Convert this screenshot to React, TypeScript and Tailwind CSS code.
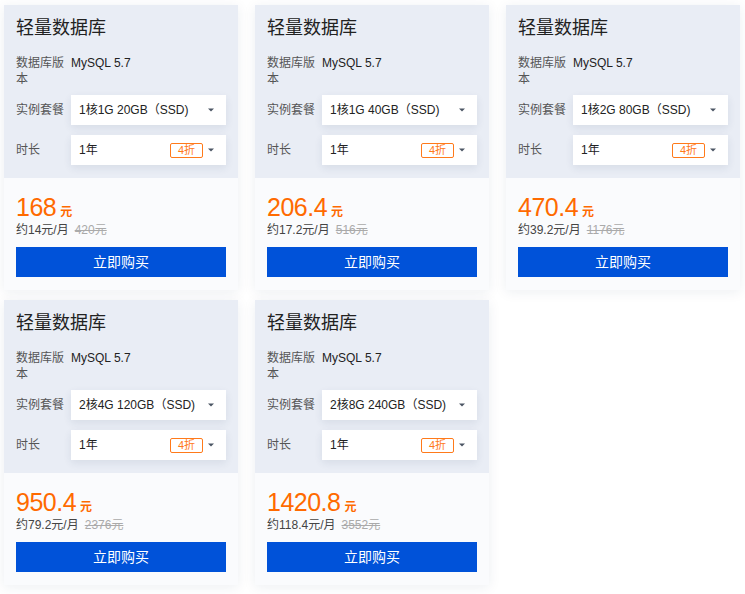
import React from 'react';

type Plan = { spec: string; price: string; monthly: string; original: string };

const plans: Plan[] = [
  { spec: '1核1G 20GB（SSD)', price: '168', monthly: '约14元/月', original: '420元' },
  { spec: '1核1G 40GB（SSD)', price: '206.4', monthly: '约17.2元/月', original: '516元' },
  { spec: '1核2G 80GB（SSD)', price: '470.4', monthly: '约39.2元/月', original: '1176元' },
  { spec: '2核4G 120GB（SSD)', price: '950.4', monthly: '约79.2元/月', original: '2376元' },
  { spec: '2核8G 240GB（SSD)', price: '1420.8', monthly: '约118.4元/月', original: '3552元' },
];

function Caret() {
  return (
    <svg width="6" height="4" viewBox="0 0 6 4" className="shrink-0">
      <path d="M0 0.5h6L3 3.5z" fill="#4b5563" />
    </svg>
  );
}

function Card({ plan }: { plan: Plan }) {
  return (
    <div className="w-[234px] h-[285px] flex flex-col bg-[#fafbfd] shadow-[0_2px_12px_rgba(30,50,90,0.08)]">
      <div className="h-[173px] bg-[#e9edf5] px-3 pt-[10px]">
        <h3 className="text-[18px] leading-[26px] text-[#222]">轻量数据库</h3>
        <div className="mt-[14px] flex text-[12px] leading-[16px]">
          <span className="w-[52px] text-[#555]">数据库版本</span>
          <span className="ml-[3px] text-[#222]">MySQL 5.7</span>
        </div>
        <div className="mt-[8px] flex items-center">
          <span className="w-[55px] text-[12px] text-[#555]">实例套餐</span>
          <div className="w-[155px] h-[30px] bg-white flex items-center justify-between pl-2 pr-[12px] shadow-[0_3px_8px_rgba(30,50,90,0.09)]">
            <span className="text-[12px] text-[#222]">{plan.spec}</span>
            <Caret />
          </div>
        </div>
        <div className="mt-[10px] flex items-center">
          <span className="w-[55px] text-[12px] text-[#555]">时长</span>
          <div className="w-[155px] h-[30px] bg-white flex items-center pl-2 pr-[12px] shadow-[0_3px_8px_rgba(30,50,90,0.09)]">
            <span className="flex-1 text-[12px] text-[#222]">1年</span>
            <span className="w-[33px] h-[15px] border border-[#ff7a1a] rounded-[2px] text-[#ff7a1a] text-[11px] leading-[12px] flex items-center justify-center mr-[5px]">
              4折
            </span>
            <Caret />
          </div>
        </div>
      </div>
      <div className="px-3 pt-[14px]">
        <div className="flex items-baseline h-[30px] leading-[30px]">
          <span className="text-[25px] tracking-[-0.5px] text-[#ff6a00]">{plan.price}</span>
          <span className="ml-1 text-[12px] font-bold text-[#ff6a00]">元</span>
        </div>
        <div className="flex text-[12px] leading-[16px]">
          <span className="text-[#444]">{plan.monthly}</span>
          <span className="ml-[6px] text-[#aaa] line-through">{plan.original}</span>
        </div>
        <button className="mt-[9px] w-[210px] h-[30px] bg-[#0052d9] text-white text-[14px]">立即购买</button>
      </div>
    </div>
  );
}

export default function App() {
  return (
    <div
      className="w-[745px] h-[594px] bg-white pl-1 pt-[5px] overflow-hidden"
      style={{ fontFamily: '"Liberation Sans", "Noto Sans CJK SC", sans-serif' }}
    >
      <div className="grid grid-cols-[234px_234px_234px] gap-x-[17px] gap-y-[10px]">
        {plans.map((p) => (
          <Card key={p.spec} plan={p} />
        ))}
      </div>
    </div>
  );
}
